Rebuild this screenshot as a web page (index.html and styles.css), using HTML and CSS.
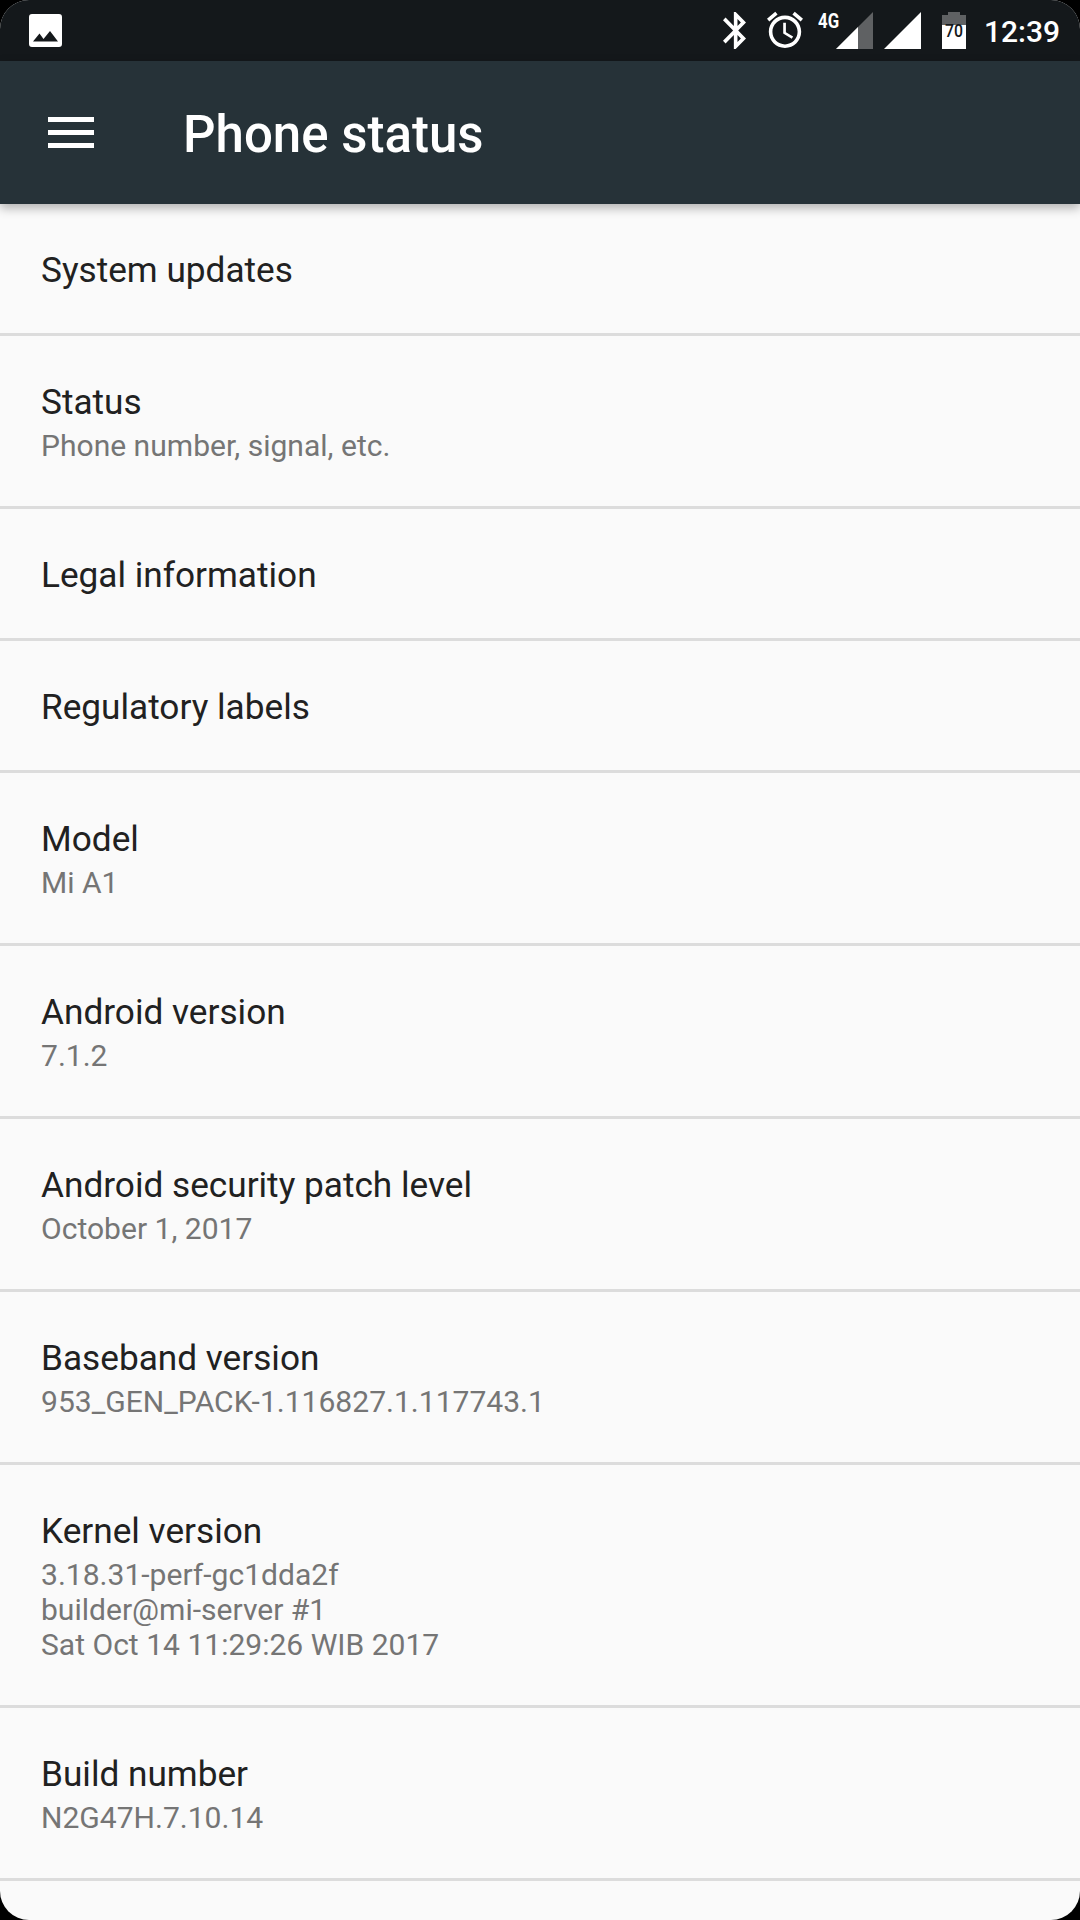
FILE: index.html
```html
<!DOCTYPE html>
<html lang="en">
<head>
  <meta charset="UTF-8">
  <title>Phone status</title>
  <link rel="stylesheet" href="styles.css">
</head>
<body>
  <div class="screen">
    <div class="status-bar">
      <svg class="picture" width="33" height="33" viewBox="0 0 33 33">
        <path fill="#fff" fill-rule="evenodd" d="M3 0h27A3 3 0 0 1 33 3v27a3 3 0 0 1-3 3H3A3 3 0 0 1 0 30V3A3 3 0 0 1 3 0zM4 27.500h25L21 17l-6.500 8L10.500 19.500z"/>
      </svg>
      <div class="status-icons">
        <svg class="bluetooth" width="23" height="37" viewBox="5 2 12.710 20" preserveAspectRatio="none">
          <path fill="#fff" d="M17.710 7.710L12 2h-1v7.590L6.410 5 5 6.410 10.590 12 5 17.590 6.410 19 11 14.410V22h1l5.710-5.710-4.300-4.290 4.300-4.290zM13 5.830l1.880 1.880L13 9.590V5.830zm1.880 10.460L13 18.170v-3.760l1.880 1.880z"/>
        </svg>
        <svg class="alarm" width="36" height="36" viewBox="2 2 20 20">
          <path fill="#fff" d="M22 5.720l-4.600-3.860-1.290 1.530 4.600 3.860L22 5.720zM7.880 3.390L6.600 1.860 2 5.710l1.290 1.530 4.590-3.850zM12.500 8H11v6l4.750 2.850.75-1.230-4-2.370V8zM12 4c-4.970 0-9 4.030-9 9s4.020 9 9 9c4.970 0 9-4.030 9-9s-4.030-9-9-9zm0 16c-3.870 0-7-3.130-7-7s3.130-7 7-7 7 3.130 7 7-3.130 7-7 7z"/>
        </svg>
        <div class="mobile">
          <span class="network">4G</span>
          <svg class="signal" width="37" height="37" viewBox="0 0 37 37">
            <path fill="#5f6163" d="M37 0v37H0z"/>
            <path fill="#fff" d="M22 15v22H0z"/>
          </svg>
        </div>
        <svg class="signal-full" width="37" height="37" viewBox="0 0 37 37">
          <path fill="#fff" d="M37 0v37H0z"/>
        </svg>
        <svg class="battery" width="24" height="37" viewBox="0 0 24 37">
          <path fill="#5f6163" d="M6 0h12v3h6v10H0V3h6z"/>
          <path fill="#fff" d="M0 13h24v24H0z"/>
          <text x="3" y="25" textLength="18" lengthAdjust="spacingAndGlyphs">70</text>
        </svg>
        <span class="clock">12:39</span>
      </div>
    </div>
    <div class="toolbar">
      <svg class="menu" width="46" height="31" viewBox="0 0 46 31">
        <path fill="#fff" d="M0 0h46v5H0zM0 13h46v5H0zM0 26h46v5H0z"/>
      </svg>
      <h1>Phone status</h1>
    </div>
    <ul class="list">
      <li>
        <div class="name">System updates</div>
      </li>
      <li>
        <div class="name">Status</div>
        <div class="value">Phone number, signal, etc.</div>
      </li>
      <li>
        <div class="name">Legal information</div>
      </li>
      <li>
        <div class="name">Regulatory labels</div>
      </li>
      <li>
        <div class="name">Model</div>
        <div class="value">Mi A1</div>
      </li>
      <li>
        <div class="name">Android version</div>
        <div class="value">7.1.2</div>
      </li>
      <li>
        <div class="name">Android security patch level</div>
        <div class="value">October 1, 2017</div>
      </li>
      <li>
        <div class="name">Baseband version</div>
        <div class="value">953_GEN_PACK-1.116827.1.117743.1</div>
      </li>
      <li>
        <div class="name">Kernel version</div>
        <div class="value">3.18.31-perf-gc1dda2f<br>builder@mi-server #1<br>Sat Oct 14 11:29:26 WIB 2017</div>
      </li>
      <li>
        <div class="name">Build number</div>
        <div class="value">N2G47H.7.10.14</div>
      </li>
    </ul>
  </div>
</body>
</html>
```
FILE: styles.css
```css
body {
  margin: 0;
  background-color: #000;
  font-family: Roboto, "Liberation Sans", sans-serif;
}
svg {
  display: block;
  flex: none;
}
.screen {
  width: 1080px;
  height: 1920px;
  overflow: hidden;
  border-radius: 29px;
  background-color: #fafafa;
}
.status-bar {
  display: flex;
  justify-content: space-between;
  box-sizing: border-box;
  height: 61px;
  padding: 12px 20px 0 29px;
  background-color: #14181b;
  color: #fff;
}
.picture {
  margin-top: 2px;
}
.status-icons {
  display: flex;
  align-items: flex-start;
}
.alarm {
  margin-left: 21px;
  overflow: visible;
}
.mobile {
  display: flex;
  margin-left: 15px;
}
.network {
  width: 18px;
  font-size: 21px;
  font-weight: bold;
  line-height: 19px;
  transform: scaleX(.8);
  transform-origin: left;
}
.signal-full {
  margin-left: 11px;
}
.battery {
  margin-left: 21px;
}
.battery text {
  fill: #14181b;
  font-size: 18px;
  font-weight: 500;
}
.clock {
  width: 76px;
  margin-left: 18px;
  font-size: 30px;
  font-weight: 500;
  line-height: 39px;
}
.toolbar {
  display: flex;
  align-items: center;
  position: relative;
  box-sizing: border-box;
  height: 143px;
  padding-left: 48px;
  background-color: #263238;
  box-shadow: 0 4px 10px rgba(0, 0, 0, .3);
  color: #fff;
}
.toolbar h1 {
  margin: 5px 0 0 89px;
  font-size: 51px;
  font-weight: 500;
  line-height: 60px;
}
.list {
  margin: 0;
  padding: 0;
  list-style: none;
}
.list li {
  padding: 45px 41px 42px;
  border-bottom: 3px solid #dcdcdc;
}
.name {
  color: #212121;
  font-size: 35.200px;
  line-height: 42px;
}
.value {
  margin: 5px 0 1px;
  color: #757575;
  font-size: 30.050px;
  line-height: 35px;
}
```
